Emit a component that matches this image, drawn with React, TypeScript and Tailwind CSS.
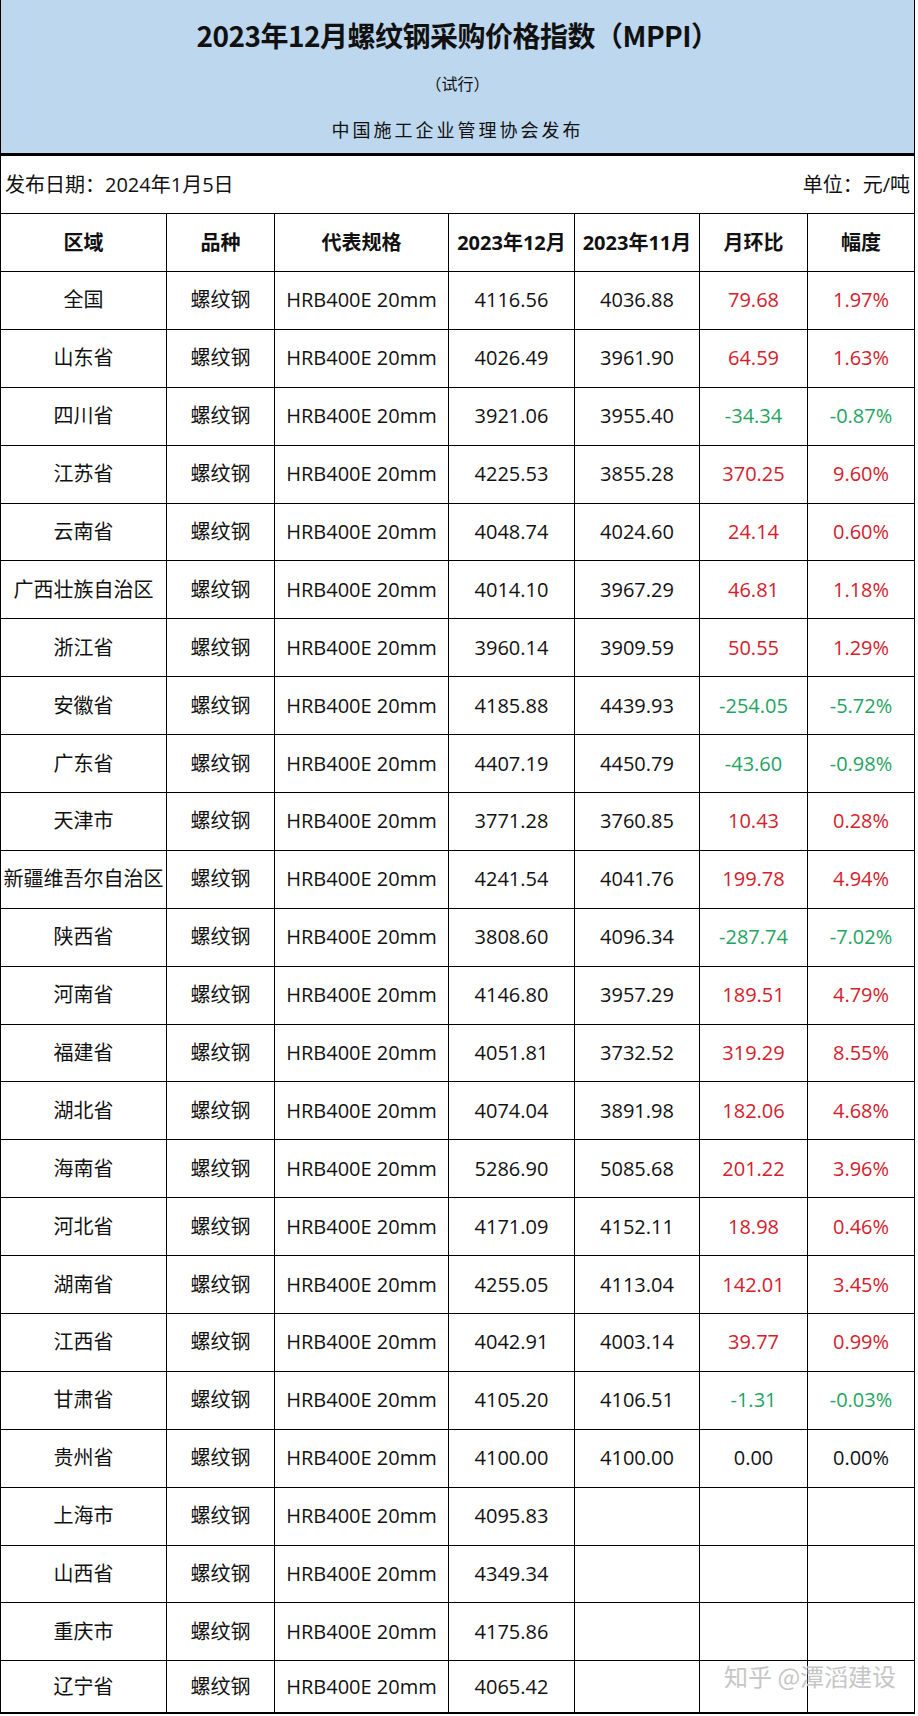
import React from "react"

const FONT = { fontFamily: '"Open Sans", "Noto Sans CJK SC", sans-serif' }
const CJK = { fontFamily: '"Noto Sans CJK SC", "Open Sans", sans-serif' }

type Row = { region: string; dec: string; nov?: string; diff?: string; pct?: string }

const ROWS: Row[] = [
  { region: "全国", dec: "4116.56", nov: "4036.88", diff: "79.68", pct: "1.97%" },
  { region: "山东省", dec: "4026.49", nov: "3961.90", diff: "64.59", pct: "1.63%" },
  { region: "四川省", dec: "3921.06", nov: "3955.40", diff: "-34.34", pct: "-0.87%" },
  { region: "江苏省", dec: "4225.53", nov: "3855.28", diff: "370.25", pct: "9.60%" },
  { region: "云南省", dec: "4048.74", nov: "4024.60", diff: "24.14", pct: "0.60%" },
  { region: "广西壮族自治区", dec: "4014.10", nov: "3967.29", diff: "46.81", pct: "1.18%" },
  { region: "浙江省", dec: "3960.14", nov: "3909.59", diff: "50.55", pct: "1.29%" },
  { region: "安徽省", dec: "4185.88", nov: "4439.93", diff: "-254.05", pct: "-5.72%" },
  { region: "广东省", dec: "4407.19", nov: "4450.79", diff: "-43.60", pct: "-0.98%" },
  { region: "天津市", dec: "3771.28", nov: "3760.85", diff: "10.43", pct: "0.28%" },
  { region: "新疆维吾尔自治区", dec: "4241.54", nov: "4041.76", diff: "199.78", pct: "4.94%" },
  { region: "陕西省", dec: "3808.60", nov: "4096.34", diff: "-287.74", pct: "-7.02%" },
  { region: "河南省", dec: "4146.80", nov: "3957.29", diff: "189.51", pct: "4.79%" },
  { region: "福建省", dec: "4051.81", nov: "3732.52", diff: "319.29", pct: "8.55%" },
  { region: "湖北省", dec: "4074.04", nov: "3891.98", diff: "182.06", pct: "4.68%" },
  { region: "海南省", dec: "5286.90", nov: "5085.68", diff: "201.22", pct: "3.96%" },
  { region: "河北省", dec: "4171.09", nov: "4152.11", diff: "18.98", pct: "0.46%" },
  { region: "湖南省", dec: "4255.05", nov: "4113.04", diff: "142.01", pct: "3.45%" },
  { region: "江西省", dec: "4042.91", nov: "4003.14", diff: "39.77", pct: "0.99%" },
  { region: "甘肃省", dec: "4105.20", nov: "4106.51", diff: "-1.31", pct: "-0.03%" },
  { region: "贵州省", dec: "4100.00", nov: "4100.00", diff: "0.00", pct: "0.00%" },
  { region: "上海市", dec: "4095.83" },
  { region: "山西省", dec: "4349.34" },
  { region: "重庆市", dec: "4175.86" },
  { region: "辽宁省", dec: "4065.42" },
]

const HEADERS = ["区域", "品种", "代表规格", "2023年12月", "2023年11月", "月环比", "幅度"]

const GRID = "grid grid-cols-[166px_108px_174px_126px_125px_108px_1fr]"

function tone(v?: string) {
  if (!v) return "text-[#111]"
  if (v.startsWith("-")) return "text-[#1fa463]"
  if (parseFloat(v) === 0) return "text-[#111]"
  return "text-[#d3212d]"
}

export default function App() {
  return (
    <div className="relative w-[918px] h-[1716px] bg-white overflow-hidden" style={FONT}>
      <div className="w-[915px] border-x border-black">
        {/* Title block */}
        <div className="h-[153px] bg-[#bdd7ee] flex flex-col items-center text-[#111]" style={CJK}>
          <h1 className="mt-[15px] text-[28px] font-bold leading-[40px] tracking-[-0.5px]">
            2023年12月螺纹钢采购价格指数（MPPI）
          </h1>
          <p className="mt-[17px] text-[16px] leading-[22px]">（试行）</p>
          <p className="mt-[22px] text-[18px] leading-[26px] tracking-[3px]">中国施工企业管理协会发布</p>
        </div>
        <div className="h-[3px] bg-black" />

        {/* Date row */}
        <div className="h-[58px] flex items-center justify-between px-[4px] text-[20px] text-[#111] border-b border-black">
          <span>发布日期：2024年1月5日</span>
          <span>单位：元/吨</span>
        </div>

        {/* Header row */}
        <div className={`${GRID} h-[58px] border-b border-black`}>
          {HEADERS.map((h, i) => (
            <div
              key={h}
              className={`flex items-center justify-center text-[20px] font-bold text-[#111] ${i < 6 ? "border-r border-black" : ""}`}
            >
              {h}
            </div>
          ))}
        </div>

        {/* Data rows */}
        {ROWS.map((r, idx) => (
          <div
            key={r.region}
            className={`${GRID} ${idx === ROWS.length - 1 ? "h-[53px] border-b-2" : "h-[57.9px] border-b"} border-black text-[20px] text-[#111]`}
          >
            <div className="flex items-center justify-center border-r border-black whitespace-nowrap">{r.region}</div>
            <div className="flex items-center justify-center border-r border-black">螺纹钢</div>
            <div className="flex items-center justify-center border-r border-black">HRB400E 20mm</div>
            <div className="flex items-center justify-center border-r border-black">{r.dec}</div>
            <div className="flex items-center justify-center border-r border-black">{r.nov}</div>
            <div className={`flex items-center justify-center border-r border-black ${tone(r.diff)}`}>{r.diff}</div>
            <div className={`flex items-center justify-center ${tone(r.pct)}`}>{r.pct}</div>
          </div>
        ))}
      </div>

      {/* Watermark */}
      <div
        className="absolute left-[724px] top-[1660px] text-[24px] leading-[32px] text-[#c6c6c6] whitespace-nowrap"
        style={{ ...CJK, textShadow: "0 0 2px rgba(255,255,255,0.9)" }}
      >
        知乎 @潭滔建设
      </div>
    </div>
  )
}
